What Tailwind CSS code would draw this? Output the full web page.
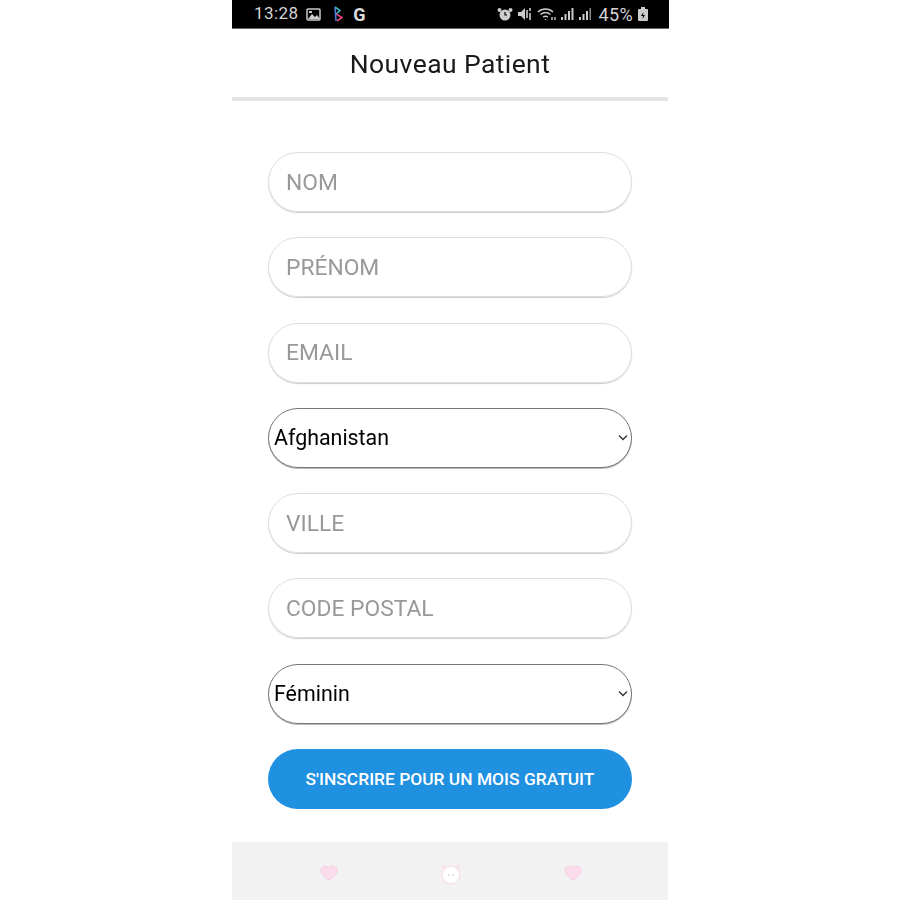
<!DOCTYPE html>
<html lang="fr">
  <head>
    <meta charset="UTF-8" />
    <meta name="viewport" content="width=device-width, initial-scale=1.0" />
    <script src="https://cdn.jsdelivr.net/npm/@tailwindcss/browser@4"></script>
    <title>Nouveau Patient</title>
  </head>
  <body class="bg-white font-['Roboto',sans-serif] overflow-hidden">
    <div class="w-[437px] h-[900px] ml-[232px] flex flex-col blur-[0.5px]">
      <!-- Status bar -->
      <div class="h-[29px] shrink-0 bg-black border-b border-[#666] flex items-center justify-between pl-[22px] pr-[20px] text-[#d4d4d4] text-[17px] font-[450]">
        <div class="flex items-center">
          <span class="tracking-[0.4px]">13:28</span>
          <svg class="ml-[8px]" width="15" height="13" viewBox="0 0 15 13"><rect x="1" y="1" width="13" height="11" rx="1" fill="none" stroke="#ccc" stroke-width="1.500"/><path d="M2 11 6 6l3 3 2-2 3 4z" fill="#ccc"/><rect x="3" y="3" width="3" height="2" fill="#ccc"/></svg>
          <svg class="ml-[11px]" width="12" height="18" viewBox="0 0 12 18" fill="none" stroke-width="1.600"><path d="M3 2 8 5.500 4 9" stroke="#3fb6c9"/><path d="M4 9 10 12.500 5 16" stroke="#e0457b"/><path d="M3 2 4 16" stroke="#4a7fd0"/></svg>
          <span class="font-bold text-[#ddd] text-[18px] ml-[9px]">G</span>
        </div>
        <div class="flex items-center">
          <svg width="16" height="15" viewBox="0 0 16 15" fill="#ccc"><circle cx="8" cy="8" r="5.500"/><circle cx="2.500" cy="3" r="2"/><circle cx="13.500" cy="3" r="2"/><path d="M8 5v3h2" stroke="#000" stroke-width="1.200" fill="none"/></svg>
          <svg class="ml-[4px]" width="15" height="14" viewBox="0 0 15 14" fill="#ccc"><path d="M1 5h3l4-4v12L4 9H1z"/><path d="M10 3v8M13 1v3M13 6v7" stroke="#ccc" stroke-width="1.600"/></svg>
          <svg class="ml-[5px]" width="20" height="14" viewBox="0 0 20 14" fill="none" stroke="#ccc" stroke-width="1.400"><path d="M1 5C5 1 12 1 16 5M3.500 7.500C6.500 5 10.500 5 13.500 7.500M6 10c1.500-1 3.500-1 5 0"/><path d="M8.500 12v1M15 10v3M18 10v3"/></svg>
          <svg class="ml-[3px]" width="34" height="14" viewBox="0 0 34 14" fill="#ccc"><rect x="1" y="10" width="2" height="3"/><rect x="4.500" y="7" width="2" height="6"/><rect x="8" y="4" width="2" height="9"/><rect x="11.500" y="1" width="2" height="12"/><rect x="19" y="10" width="2" height="3"/><rect x="22.500" y="7" width="2" height="6"/><rect x="26" y="4" width="2" height="9"/><rect x="29.500" y="1" width="1.500" height="12" fill="#888"/></svg>
          <span class="ml-[4px] text-[18px] tracking-[0.4px]">45%</span>
          <svg class="ml-[4px]" width="12" height="16" viewBox="0 0 12 16" fill="#ccc"><rect x="1" y="3" width="10" height="12" rx="1"/><rect x="4" y="1" width="4" height="2"/><path d="M6.500 6 4 10h2l-.5 3 2.500-4H6z" fill="#000"/></svg>
        </div>
      </div>

      <!-- Title -->
      <header class="h-[72px] w-[436px] shrink-0 flex items-center justify-center border-b-[4px] border-[#e4e4e4]">
        <h1 class="text-[26.500px] font-[450] text-[#1a1a1a] tracking-[0.4px] pt-[2px]">Nouveau Patient</h1>
      </header>

      <!-- Form -->
      <form class="flex-1 w-[436px] px-[36px] pt-[51px] flex flex-col gap-[25.300px]">
        <input placeholder="NOM" class="h-[60px] w-full rounded-full border border-[#ddd] shadow-[0_1px_1px_#ccc] pl-[17px] text-[22.800px] placeholder:text-[#999] outline-none" />
        <input placeholder="PRÉNOM" class="h-[60px] w-full rounded-full border border-[#ddd] shadow-[0_1px_1px_#ccc] pl-[17px] text-[22.800px] placeholder:text-[#999] outline-none" />
        <input placeholder="EMAIL" class="h-[60px] w-full rounded-full border border-[#ddd] shadow-[0_1px_1px_#ccc] pl-[17px] text-[22.800px] placeholder:text-[#999] outline-none" />
        <div class="relative">
          <select class="appearance-none h-[60px] w-full rounded-full border border-[#777] shadow-[0_1px_0_#bbb] bg-white pl-[5px] text-[21.400px] text-black outline-none">
            <option>Afghanistan</option>
          </select>
          <svg class="absolute right-[4px] top-[26px] pointer-events-none" width="10" height="7" viewBox="0 0 10 7" fill="none" stroke="#333" stroke-width="1.300"><path d="M1 1.500 5 5.500 9 1.500"/></svg>
        </div>
        <input placeholder="VILLE" class="h-[60px] w-full rounded-full border border-[#ddd] shadow-[0_1px_1px_#ccc] pl-[17px] text-[22.800px] placeholder:text-[#999] outline-none" />
        <input placeholder="CODE POSTAL" class="h-[60px] w-full rounded-full border border-[#ddd] shadow-[0_1px_1px_#ccc] pl-[17px] text-[22.800px] placeholder:text-[#999] outline-none" />
        <div class="relative">
          <select class="appearance-none h-[60px] w-full rounded-full border border-[#777] shadow-[0_1px_0_#bbb] bg-white pl-[5px] text-[21.400px] text-black outline-none">
            <option>Féminin</option>
          </select>
          <svg class="absolute right-[4px] top-[26px] pointer-events-none" width="10" height="7" viewBox="0 0 10 7" fill="none" stroke="#333" stroke-width="1.300"><path d="M1 1.500 5 5.500 9 1.500"/></svg>
        </div>
        <button type="button" class="h-[60px] w-full rounded-full bg-[#2090e0] text-white text-[17.400px] font-medium">S'INSCRIRE POUR UN MOIS GRATUIT</button>
      </form>

      <!-- Footer -->
      <footer class="h-[58px] w-[436px] shrink-0 bg-[#f2f2f2] flex items-start justify-center gap-[101px] pt-[21px] pl-[2px]">
        <svg class="mt-[2px]" width="18" height="16" viewBox="0 0 20 17"><path d="M10 16C4 13 1 9 1 5.500 1 2.500 3.500 1 6 1c2 0 3.200 1 4 2.500C10.800 2 12 1 14 1c2.500 0 5 1.500 5 4.500C19 9 16 13 10 16z" fill="#fbdcec" stroke="#f6c8df"/></svg>
        <svg width="24" height="22" viewBox="0 0 24 22"><path d="M3 2 8 3 4 7zM21 2l-5 1 4 4z" fill="#f8e0ea"/><circle cx="12" cy="12" r="9" fill="#fff" stroke="#f8e6ee" stroke-width="2"/><path d="M9 12h1.500M13.500 12H15" stroke="#bbb" stroke-width="1"/></svg>
        <svg class="mt-[2px]" width="18" height="16" viewBox="0 0 20 17"><path d="M10 16C4 13 1 9 1 5.500 1 2.500 3.500 1 6 1c2 0 3.200 1 4 2.500C10.800 2 12 1 14 1c2.500 0 5 1.500 5 4.500C19 9 16 13 10 16z" fill="#fbdcec" stroke="#f6c8df"/></svg>
      </footer>
    </div>
  </body>
</html>
